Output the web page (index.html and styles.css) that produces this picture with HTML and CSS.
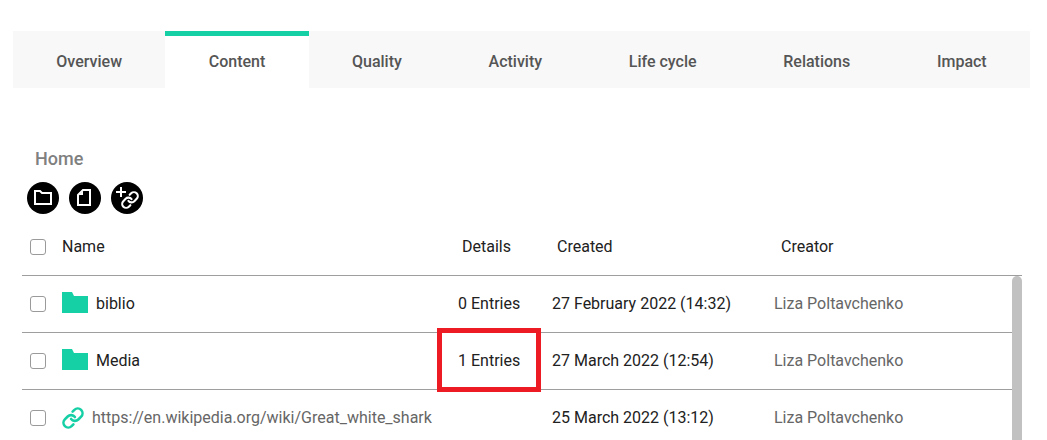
FILE: index.html
```html
<!DOCTYPE html>
<html lang="en">
<head>
<meta charset="utf-8">
<title>Content</title>
<link rel="stylesheet" href="styles.css">
</head>
<body>
<svg class="sprite" aria-hidden="true">
  <symbol id="chain" viewBox="0.5 0.5 23 23">
    <g fill="none" stroke="currentColor" stroke-width="2.7" stroke-linecap="round">
      <path d="M10 13a5 5 0 0 0 7.54.54l3-3a5 5 0 0 0-7.07-7.07l-1.9 1.9"/>
      <path d="M14 11a5 5 0 0 0-7.54-.54l-3 3a5 5 0 0 0 7.07 7.07l1.9-1.9"/>
    </g>
  </symbol>
  <symbol id="folder" viewBox="0 0 26 21">
    <path fill="currentColor" d="M0 0H10L12 4H26V21H0Z"/>
  </symbol>
</svg>
<div class="page">
  <nav class="tabs">
    <a class="tab" href="#overview">Overview</a>
    <a class="tab tab-active" href="#content" aria-current="page">Content</a>
    <a class="tab" href="#quality">Quality</a>
    <a class="tab" href="#activity">Activity</a>
    <a class="tab" href="#lifecycle">Life cycle</a>
    <a class="tab" href="#relations">Relations</a>
    <a class="tab" href="#impact">Impact</a>
  </nav>
  <main class="content">
    <h1 class="location">Home</h1>
    <div class="actions">
      <button class="action" type="button" aria-label="New folder">
        <svg viewBox="0 0 32 32" fill="none" stroke="#fff" stroke-width="2"><path d="M8 9H13L15 11H24V22H8Z"/></svg>
      </button>
      <button class="action" type="button" aria-label="New file">
        <svg viewBox="0 0 32 32" fill="none" stroke="#fff" stroke-width="2"><path d="M14 8H21V23H9V13Z"/><path d="M14 9L10 13H14Z" fill="#fff" stroke="none"/></svg>
      </button>
      <button class="action" type="button" aria-label="Add link">
        <svg viewBox="0 0 32 32" color="#fff"><path d="M5 10H15M10 5V15" stroke="#fff" stroke-width="2"/><use href="#chain" x="10" y="9" width="18" height="18"/></svg>
      </button>
    </div>
    <div class="listing">
      <table class="files">
        <colgroup><col class="col-check"><col><col class="col-details"><col class="col-created"><col class="col-creator"></colgroup>
        <thead>
          <tr>
            <th><input class="check" type="checkbox" aria-label="Select all"></th>
            <th>Name</th>
            <th class="head-details">Details</th>
            <th class="head-created">Created</th>
            <th class="head-creator">Creator</th>
          </tr>
        </thead>
        <tbody>
          <tr>
            <td><input class="check" type="checkbox" aria-label="Select biblio"></td>
            <td><a class="entry" href="#biblio"><svg class="folder"><use href="#folder"/></svg>biblio</a></td>
            <td>0 Entries</td>
            <td>27 February 2022 (14:32)</td>
            <td class="muted">Liza Poltavchenko</td>
          </tr>
          <tr>
            <td><input class="check" type="checkbox" aria-label="Select Media"></td>
            <td><a class="entry" href="#media"><svg class="folder"><use href="#folder"/></svg>Media</a></td>
            <td class="marked">1 Entries</td>
            <td>27 March 2022 (12:54)</td>
            <td class="muted">Liza Poltavchenko</td>
          </tr>
          <tr>
            <td><input class="check" type="checkbox" aria-label="Select link"></td>
            <td><a class="entry muted" href="https://en.wikipedia.org/wiki/Great_white_shark"><svg class="chain"><use href="#chain"/></svg>https://en.wikipedia.org/wiki/Great_white_shark</a></td>
            <td></td>
            <td>25 March 2022 (13:12)</td>
            <td class="muted">Liza Poltavchenko</td>
          </tr>
        </tbody>
      </table>
      <div class="scrollbar"></div>
    </div>
  </main>
</div>
</body>
</html>
```
FILE: styles.css
```css
* { box-sizing: border-box; }
body {
  margin: 0;
  background: #fff;
  color: #212121;
  font: 16px/24px Roboto, sans-serif;
}
.sprite { display: none; }
.page {
  height: 100vh;
  overflow: hidden;
  padding: 31px 17px 0 13px;
}
.tabs { display: flex; background: #f8f8f8; }
.tab {
  flex: 1 1 auto;
  padding: 14px 0;
  border-top: 5px solid transparent;
  color: #555;
  font-weight: 500;
  text-align: center;
  text-decoration: none;
}
.tab-active { background: #fff; border-top-color: #15cfa5; }
.content { padding: 59px 8px 0 9px; }
.location {
  margin: 0 0 11px 13px;
  color: #808080;
  font-size: 18px;
  font-weight: 500;
  line-height: 24px;
}
.actions { display: flex; gap: 10px; padding-left: 5px; }
.action {
  width: 32px;
  height: 32px;
  padding: 0;
  border: 0;
  border-radius: 50%;
  background: #000;
}
.action svg { display: block; width: 32px; height: 32px; }
.listing { position: relative; margin-top: 5px; }
.files {
  width: 100%;
  border-collapse: separate;
  border-spacing: 0;
  table-layout: fixed;
}
.col-check { width: 40px; }
.col-details { width: 94px; }
.col-created { width: 222px; }
.col-creator { width: 248px; }
th, td {
  height: 57px;
  padding: 0;
  border-bottom: 1px solid #9e9e9e;
  font-weight: 400;
  text-align: left;
  white-space: nowrap;
}
.head-details { padding-left: 4px; }
.head-created { padding-left: 5px; }
.head-creator { padding-left: 7px; }
.muted { color: #666; }
.check {
  display: block;
  appearance: none;
  width: 16px;
  height: 16px;
  margin: 0 0 0 8px;
  border: 1px solid #9a9a9a;
  border-radius: 3px;
  background: #fff;
}
.entry {
  display: flex;
  align-items: center;
  color: #212121;
  text-decoration: none;
}
.entry.muted { color: #666; }
.folder { width: 26px; height: 21px; margin: 0 8px 3px 0; color: #15cfa5; }
.chain { width: 22px; height: 22px; margin-right: 8px; color: #15cfa5; }
.marked { position: relative; }
.marked::after {
  content: "";
  position: absolute;
  inset: -5px 11px -3px -21px;
  border: 5px solid #ed1c24;
}
.scrollbar {
  position: absolute;
  top: 57px;
  right: 0;
  bottom: 0;
  width: 10px;
  border-radius: 5px;
  background: #c1c1c1;
}
```
